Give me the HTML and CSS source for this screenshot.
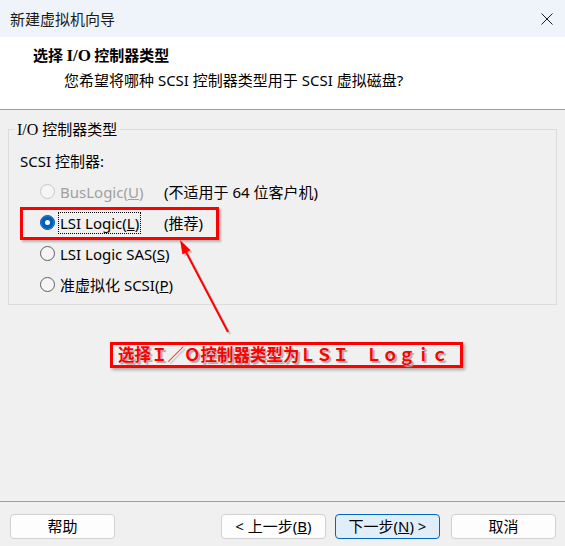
FILE: index.html
```html
<!DOCTYPE html>
<html lang="zh-CN">
<head>
    <meta charset="UTF-8">
    <title>新建虚拟机向导</title>
    <link rel="stylesheet" href="styles.css">
</head>
<body>
    <div class="window">
        <div class="titlebar">
            <span class="title">新建虚拟机向导</span>
            <svg class="close" width="12" height="12" viewBox="0 0 12 12">
                <path d="M0.5 0.5 L11.5 11.5 M11.5 0.5 L0.5 11.5" stroke="#1a1a1a" stroke-width="1" fill="none"/>
            </svg>
        </div>

        <div class="header">
            <h1>选择 <span class="serif">I/O</span> 控制器类型</h1>
            <p class="subtitle">您希望将哪种 SCSI 控制器类型用于 SCSI 虚拟磁盘?</p>
        </div>

        <div class="content">
            <fieldset class="group">
                <legend><span class="serif-light">I/O</span> 控制器类型</legend>
                <div class="group-label">SCSI 控制器:</div>
                <div class="options">
                    <label class="option disabled">
                        <input type="radio" name="ctrl" disabled>
                        <span class="text">BusLogic(<u>U</u>)</span>
                    </label>
                    <span class="note">(不适用于 64 位客户机)</span>

                    <label class="option">
                        <input type="radio" name="ctrl" checked>
                        <span class="text focus">LSI Logic(<u>L</u>)</span>
                    </label>
                    <span class="note">(推荐)</span>

                    <label class="option">
                        <input type="radio" name="ctrl">
                        <span class="text">LSI Logic SAS(<u>S</u>)</span>
                    </label>
                    <span class="note"></span>

                    <label class="option">
                        <input type="radio" name="ctrl">
                        <span class="text">准虚拟化 SCSI(<u>P</u>)</span>
                    </label>
                    <span class="note"></span>
                </div>
            </fieldset>
        </div>

        <div class="footer">
            <button class="btn">帮助</button>
            <div class="btn-group">
                <button class="btn">&lt; 上一步(<u>B</u>)</button>
                <button class="btn default">下一步(<u>N</u>) &gt;</button>
                <button class="btn cancel">取消</button>
            </div>
        </div>

        <!-- annotation overlay -->
        <div class="mark-box"></div>
        <svg class="arrow" width="565" height="546" viewBox="0 0 565 546">
            <g transform="translate(2,2)" opacity="0.35">
                <line x1="228" y1="332" x2="186" y2="252" stroke="#777" stroke-width="2"/>
                <polygon points="180,240 190.5,250.3 182.5,254.5" fill="#777"/>
            </g>
            <line x1="228" y1="332" x2="186" y2="252" stroke="#ff0000" stroke-width="2"/>
            <polygon points="180,240 190.5,250.3 182.5,254.5" fill="#ff0000"/>
        </svg>
        <div class="note-box">选择Ｉ／Ｏ控制器类型为ＬＳＩ　Ｌｏｇｉｃ</div>
    </div>
</body>
</html>
```

FILE: styles.css
```css
* {
    margin: 0;
    padding: 0;
    box-sizing: border-box;
}

body {
    font-family: 'Noto Sans', 'Noto Sans CJK SC', sans-serif;
    font-size: 15px;
    color: #000;
    background: #f0f0f0;
}

.window {
    position: relative;
    width: 565px;
    height: 546px;
    display: flex;
    flex-direction: column;
    background: #f0f0f0;
    overflow: hidden;
}

/* Title bar */
.titlebar {
    height: 37px;
    background: #eef4f9;
    display: flex;
    align-items: center;
    justify-content: space-between;
    padding: 0 12px 0 10px;
}

.title {
    font-family: 'Noto Sans CJK SC', sans-serif;
    font-size: 15px;
    color: #1a1a1a;
}

/* Header */
.header {
    height: 73px;
    background: #fff;
    border-bottom: 1px solid #a0a0a0;
    padding: 8px 0 0 33px;
}

.header h1 {
    font-family: 'Noto Sans CJK SC', sans-serif;
    font-size: 15px;
    font-weight: 700;
    line-height: 20px;
}

.serif {
    font-family: 'Liberation Serif', 'Noto Sans CJK SC', serif;
    font-weight: 700;
    font-size: 17px;
}

.serif-light {
    font-family: 'Liberation Serif', serif;
    font-size: 16px;
}

.subtitle {
    margin: 4px 0 0 31px;
    line-height: 20px;
}

/* Group box */
.content {
    flex: 1;
    padding: 9px 8px 0 8px;
}

.group {
    border: 1px solid #dcdcdc;
    padding: 0 0 4px 0;
    min-width: 0;
}

.group legend {
    margin-left: 5px;
    padding: 0 3px;
    line-height: 20px;
}

.group-label {
    margin: 11px 0 0 11px;
    line-height: 20px;
}

.options {
    margin-top: 5px;
    display: grid;
    grid-template-columns: 155px auto;
    grid-auto-rows: 31px;
    align-items: center;
}

.option {
    display: flex;
    align-items: center;
    gap: 5px;
    padding-left: 31px;
}

.option input {
    appearance: none;
    width: 15px;
    height: 15px;
    border: 1px solid #5e5e5e;
    border-radius: 50%;
    background: #f5f5f5;
    flex-shrink: 0;
}

.option input:checked {
    background: #005fb8;
    border-color: #005fb8;
    box-shadow: inset 0 0 0 4px #005fb8, inset 0 0 0 8px #fff;
}

.option input:disabled {
    border-color: #c6c6c6;
    background: #f5f5f5;
}

.option.disabled .text {
    color: #a0a0a0;
}

.text {
    line-height: 20px;
    white-space: nowrap;
}

.text.focus {
    outline: 1px dotted #000;
    margin-left: -1px;
    padding: 0 1px;
}

.note {
    line-height: 20px;
}

/* Footer buttons */
.footer {
    height: 45px;
    border-top: 1px solid #a0a0a0;
    display: flex;
    justify-content: space-between;
    align-items: flex-start;
    padding: 12px 9px 0 10px;
}

.btn-group {
    display: flex;
    gap: 9px;
}

.btn {
    width: 105px;
    height: 25px;
    background: #fdfdfd;
    border: 1px solid #d0d0d0;
    border-radius: 4px;
    font-family: 'Noto Sans', 'Noto Sans CJK SC', sans-serif;
    font-size: 15px;
    color: #000;
    line-height: 21px;
}

.btn.default {
    background: #e0eef9;
    border-color: #0067c0;
}

.btn.cancel {
    margin-left: 2px;
}

/* Annotation overlay */
.mark-box {
    position: absolute;
    left: 20px;
    top: 207px;
    width: 199px;
    height: 33px;
    border: 3px solid #ff0000;
    box-shadow: 2px 2px 2px rgba(0,0,0,0.25);
}

.arrow {
    position: absolute;
    left: 0;
    top: 0;
    pointer-events: none;
}

.note-box {
    position: absolute;
    left: 110px;
    top: 342px;
    width: 353px;
    height: 26px;
    border: 3px solid #ff0000;
    box-shadow: 2px 2px 3px rgba(0,0,0,0.3);
    padding-left: 5px;
    font-family: 'Noto Sans CJK SC', sans-serif;
    font-size: 16.5px;
    font-weight: 700;
    line-height: 19px;
    color: #ff0000;
    text-shadow: 2px 2px 1px #aaa;
    white-space: nowrap;
}
```
